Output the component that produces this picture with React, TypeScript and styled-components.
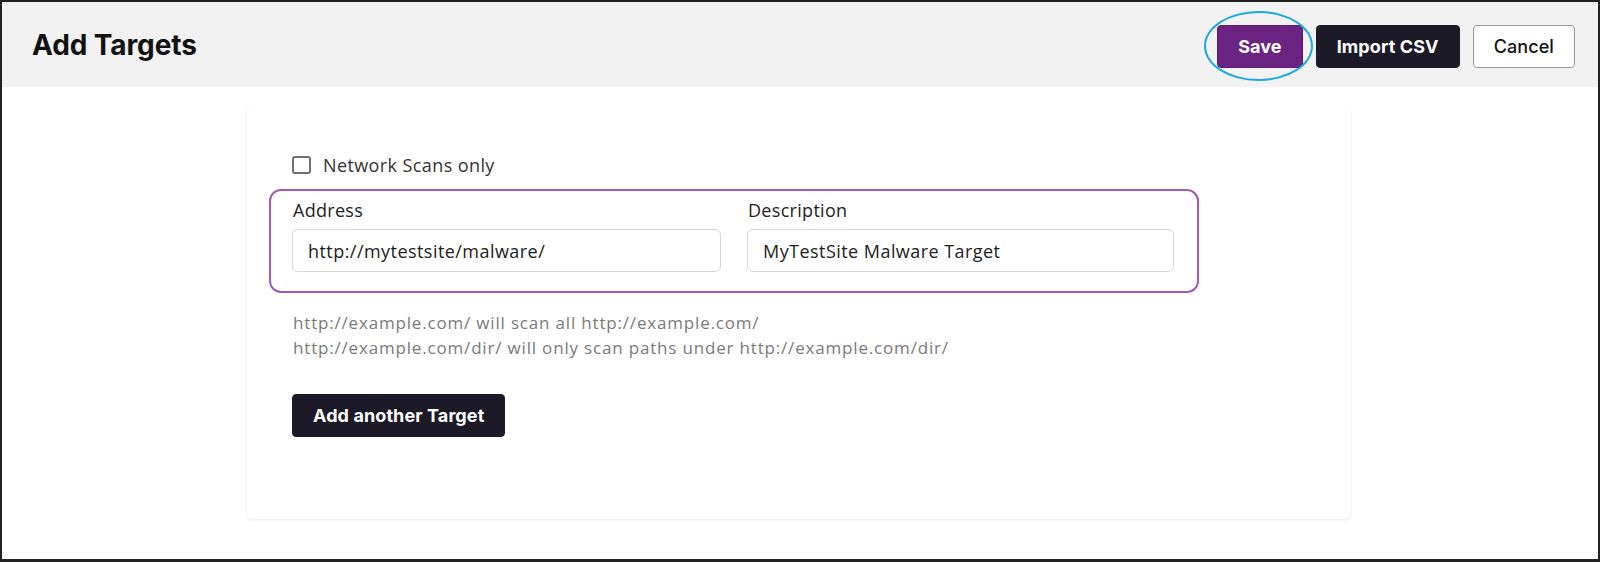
import React from "react";
import styled, { createGlobalStyle } from "styled-components";

const Global = createGlobalStyle`
  html, body { margin: 0; padding: 0; background: #fff; }
  * { box-sizing: border-box; }
  body { font-family: "Open Sans", "Liberation Sans", sans-serif; }
`;

const Frame = styled.div`
  width: 1600px;
  height: 562px;
  border: 2px solid #222;
  border-bottom-width: 3px;
  display: flex;
  flex-direction: column;
  background: #fff;
`;

const Header = styled.header`
  height: 85px;
  background: #f2f2f2;
  display: flex;
  align-items: center;
  justify-content: space-between;
  padding: 3px 23px 0 30px;
  flex-shrink: 0;
`;

const Title = styled.h1`
  margin: 0 0 2px;
  font-family: "Inter", "Liberation Sans", sans-serif;
  font-weight: 700;
  font-size: 28px;
  color: #111;
  letter-spacing: -0.1px;
`;

const Actions = styled.div`
  display: flex;
  align-items: center;
  gap: 13px;
`;

const Button = styled.button<{ $variant: "primary" | "dark" | "outline" }>`
  height: 43px;
  padding: 0 20px;
  border-radius: 4px;
  font-family: "Inter", "Liberation Sans", sans-serif;
  font-weight: ${(p) => (p.$variant === "outline" ? 500 : 700)};
  font-size: 18px;
  letter-spacing: 0.1px;
  cursor: pointer;
  background: ${(p) =>
    p.$variant === "primary" ? "#6b2482" : p.$variant === "dark" ? "#1c1a27" : "#fff"};
  color: ${(p) => (p.$variant === "outline" ? "#111" : "#fff")};
  border: 1px solid
    ${(p) => (p.$variant === "outline" ? "#9a9a9a" : p.$variant === "primary" ? "#5b1d70" : "#1c1a27")};
`;

const Highlight = styled.span`
  position: relative;
  display: inline-flex;
  &::after {
    content: "";
    position: absolute;
    left: -13px;
    right: -10px;
    top: -14px;
    bottom: -13px;
    border: 2.5px solid #1ba8e0;
    border-radius: 50%;
    pointer-events: none;
  }
`;

const Body = styled.main`
  flex: 1;
  padding: 19px 0 0 245px;
`;

const Card = styled.section`
  width: 1104px;
  height: 413px;
  background: #fff;
  border-radius: 6px;
  box-shadow: 0 1px 3px rgba(0, 0, 0, 0.08), 0 0 1px rgba(0, 0, 0, 0.06);
  padding: 50px 0 0 22px;
`;

const CheckRow = styled.label`
  display: flex;
  align-items: center;
  gap: 12px;
  margin-left: 23px;
  font-size: 18px;
  letter-spacing: 0.4px;
  color: #333;
  height: 18px;
`;

const Box = styled.span`
  width: 19px;
  height: 18px;
  border: 2px solid #707070;
  border-radius: 3px;
  flex-shrink: 0;
`;

const TargetGroup = styled.div`
  margin-top: 15px;
  width: 930px;
  height: 104px;
  border: 2px solid #a25ab8;
  border-radius: 12px;
  padding: 8px 23px 0 21px;
  display: grid;
  grid-template-columns: 429px 427px;
  column-gap: 26px;
`;

const Field = styled.div`
  display: flex;
  flex-direction: column;
`;

const Label = styled.span`
  font-size: 18px;
  letter-spacing: 0.3px;
  color: #222;
  line-height: 22px;
  margin-left: 1px;
  margin-bottom: 8px;
`;

const Input = styled.div`
  height: 43px;
  border: 1px solid #d8d8d8;
  border-radius: 6px;
  display: flex;
  align-items: center;
  padding-left: 15px;
  font-size: 18px;
  letter-spacing: 0.45px;
  color: #222;
`;

const Help = styled.p`
  margin: 17px 0 0 24px;
  font-size: 17px;
  letter-spacing: 0.82px;
  line-height: 25px;
  color: #7a7a7a;
`;

const AddWrap = styled.div`
  margin: 34px 0 0 23px;
`;

export default function App() {
  return (
    <>
      <Global />
      <Frame>
        <Header>
          <Title>Add Targets</Title>
          <Actions>
            <Highlight>
              <Button $variant="primary">Save</Button>
            </Highlight>
            <Button $variant="dark">Import CSV</Button>
            <Button $variant="outline">Cancel</Button>
          </Actions>
        </Header>
        <Body>
          <Card>
            <CheckRow>
              <Box />
              Network Scans only
            </CheckRow>
            <TargetGroup>
              <Field>
                <Label>Address</Label>
                <Input>http://mytestsite/malware/</Input>
              </Field>
              <Field>
                <Label>Description</Label>
                <Input>MyTestSite Malware Target</Input>
              </Field>
            </TargetGroup>
            <Help>
              http://example.com/ will scan all http://example.com/
              <br />
              http://example.com/dir/ will only scan paths under http://example.com/dir/
            </Help>
            <AddWrap>
              <Button $variant="dark">Add another Target</Button>
            </AddWrap>
          </Card>
        </Body>
      </Frame>
    </>
  );
}
